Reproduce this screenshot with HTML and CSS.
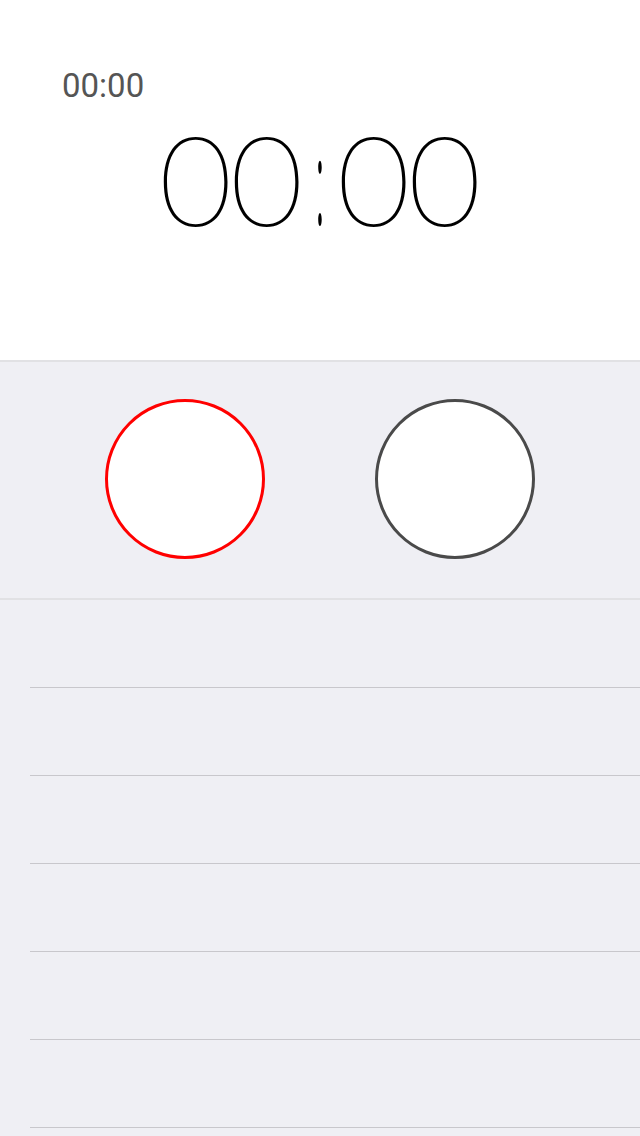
FILE: index.html
```html
<!DOCTYPE html>
<html>
<head>
<meta charset="utf-8">
<link rel="stylesheet" href="styles.css">
</head>
<body>
<div class="app">
  <section class="display">
    <div class="lap-time">00:00</div>
    <div class="main-time">
      <span class="digit">0</span><span class="digit">0</span><span class="colon">:</span><span class="digit">0</span><span class="digit">0</span>
    </div>
  </section>
  <section class="controls">
    <button class="btn btn-start" aria-label="Start"></button>
    <button class="btn btn-lap" aria-label="Lap"></button>
  </section>
  <ul class="laps">
    <li class="lap-row"></li>
    <li class="lap-row"></li>
    <li class="lap-row"></li>
    <li class="lap-row"></li>
    <li class="lap-row"></li>
    <li class="lap-row"></li>
  </ul>
</div>
</body>
</html>
```
FILE: styles.css
```css
html, body {
  margin: 0;
  padding: 0;
  background: #efeff4;
}
.app {
  width: 640px;
  height: 1136px;
  overflow: hidden;
  display: flex;
  flex-direction: column;
  font-family: "Liberation Sans", Arial, sans-serif;
}
.display {
  height: 360px;
  background: #fff;
  border-bottom: 2px solid #e1e1e4;
  box-sizing: content-box;
  display: flex;
  flex-direction: column;
}
.lap-time {
  margin: 68px 0 0 62px;
  font-family: Roboto, "Liberation Sans", sans-serif;
  font-size: 33px;
  line-height: 36px;
  color: #555;
}
.main-time {
  display: flex;
  justify-content: center;
  align-items: center;
  height: 120px;
  margin-top: 18px;
  font-family: Inter, sans-serif;
  font-weight: 100;
  font-size: 121px;
  color: #000;
}
.digit {
  display: inline-block;
  width: 71px;
  text-align: center;
  transform: scaleX(1.18);
}
.colon {
  display: inline-block;
  width: 36px;
  text-align: center;
  font-size: 124px;
  font-weight: 300;
  transform: translateY(-2px) scale(0.27, 1);
}
.controls {
  height: 234px;
  padding-bottom: 2px;
  border-bottom: 2px solid #e1e1e4;
  display: flex;
  justify-content: space-between;
  align-items: center;
  padding-left: 105px;
  padding-right: 105px;
}
.btn {
  width: 160px;
  height: 160px;
  border-radius: 50%;
  background: #fff;
  padding: 0;
  box-sizing: border-box;
}
.btn-start {
  border: 3px solid #ff0000;
}
.btn-lap {
  border: 3px solid #4a4a4a;
}
.laps {
  list-style: none;
  margin: 0;
  padding: 0 0 0 30px;
}
.lap-row {
  height: 87px;
  border-bottom: 1px solid #c8c7cc;
}
```
